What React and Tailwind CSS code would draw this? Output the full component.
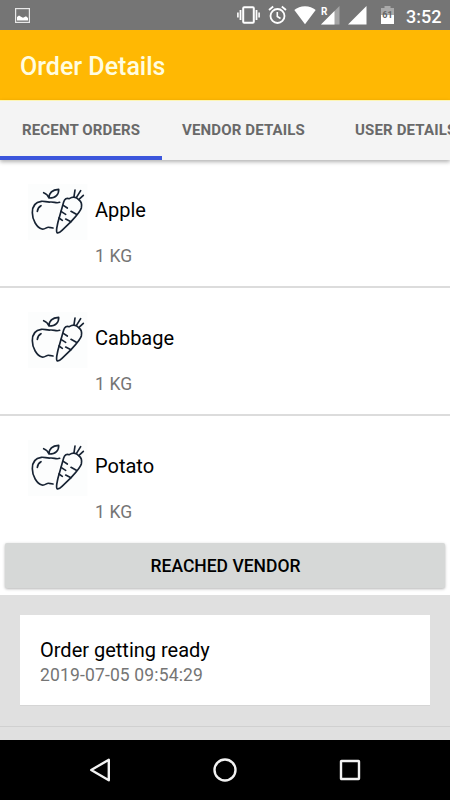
import { useState } from "react";

const tabs = [
  { label: "RECENT ORDERS", className: "w-[162px] pl-[22px]" },
  { label: "VENDOR DETAILS", className: "w-[173px] pl-[20px]" },
  { label: "USER DETAILS", className: "w-[162px] pl-[20px]" }
];

const items = [
  { name: "Apple", quantity: "1 KG" },
  { name: "Cabbage", quantity: "1 KG" },
  { name: "Potato", quantity: "1 KG" }
];

function StatusBar() {
  return (
    <div className="flex h-[30px] shrink-0 items-center bg-[#757575] text-white">
      {/* Screenshot notification */}
      <svg className="ml-[15px] h-[15px] w-[15px]" viewBox="0 0 15 15" fill="none">
        <rect x="0.6" y="0.6" width="13.8" height="13.8" stroke="#e8e8e8" strokeWidth="1.2" />
        <path d="M2 12.5V9l2-1.5 2 1.3 2 1 3-1.5 2 1.7v2.5z" fill="#fff" />
      </svg>

      <div className="ml-auto flex h-full items-center pr-[10px]">
        {/* Vibrate */}
        <svg className="h-[20px] w-[23px]" viewBox="0 0 23 20" fill="none" stroke="#fff">
          <rect x="6.2" y="2.2" width="10.6" height="15.6" rx="1" strokeWidth="2" />
          <path d="M3.5 5v10M19.5 5v10" strokeWidth="1.8" />
          <path d="M0.9 7.5v5M22.1 7.5v5" strokeWidth="1.6" />
        </svg>
        {/* Alarm */}
        <svg className="ml-[8px] h-[20px] w-[19px]" viewBox="0 0 19 20" fill="none" stroke="#fff">
          <circle cx="9.5" cy="11" r="7" strokeWidth="1.8" />
          <path d="M9.3 7v4.5l3.2 2" strokeWidth="1.6" />
          <path d="M1 5l4.2-3.5M18 5l-4.2-3.5" strokeWidth="1.8" />
        </svg>
        {/* Wifi */}
        <svg className="ml-[7px] h-[20px] w-[22px]" viewBox="0 0 22 20" fill="#fff">
          <path d="M11 19.2L0.3 5C3.2 2.6 6.8 1.2 11 1.2S18.8 2.6 21.7 5z" />
        </svg>
        {/* Roaming signal */}
        <div className="relative ml-[5px] h-[20px] w-[19px]">
          <svg className="h-[20px] w-[19px]" viewBox="0 0 19 20">
            <path d="M0 19.5L18.5 1v18.5z" fill="#a5a5a5" />
            <path d="M0 19.5L13.5 6v13.5z" fill="#fff" />
          </svg>
          <span className="absolute left-0 top-[2px] bg-[#757575] text-[10px] leading-[9px] font-bold">R</span>
        </div>
        <svg className="ml-[8px] h-[20px] w-[19px]" viewBox="0 0 19 20" fill="#fff">
          <path d="M0 19.5L18.5 1v18.5z" />
        </svg>
        {/* Battery */}
        <div className="relative ml-[14px] h-[20px] w-[13px]">
          <svg className="h-[20px] w-[13px]" viewBox="0 0 13 20">
            <path d="M3.5 1h6v2H13v7H0V3h3.5z" fill="#a9a9a9" />
            <path d="M0 10h13v9H0z" fill="#fff" />
          </svg>
          <span className="absolute inset-x-0 top-[6px] text-center text-[9px] leading-[9px] font-bold text-[#666]">61</span>
        </div>
        <span className="ml-[12px] mt-[3px] w-[34px] whitespace-nowrap text-[18px] leading-[20px] font-medium">3:52</span>
      </div>
    </div>
  );
}

function ProduceIcon() {
  return (
    <svg
      className="h-[60px] w-[65px] shrink-0"
      viewBox="0 0 195 180"
      fill="none"
      stroke="#172333"
      strokeWidth="5"
      strokeLinecap="round"
      strokeLinejoin="round"
    >
      <rect x="9" y="12" width="178" height="168" fill="#fcfdfd" stroke="none" />
      {/* Apple */}
      <path d="M104 67C93 71 88 65 76 66C66 67 58 63 49 64C31 66 22 80 22 98C22 120 35 142 51 147C61 149 64 140 73 142L84 144" />
      <path d="M37 94C38 85 42 80 48 77" />
      <path d="M56 38C65 41 69 46 72 54C72 38 83 29 101 28C102 43 92 54 73 54" />
      {/* Carrot */}
      <path d="M96 158C92 151 97 138 99 126L116 66C119 56 125 53 133 56C144 49 155 52 162 60C170 65 171 74 169 84C166 95 151 111 139 124L111 151C105 157 101 160 96 158Z" />
      <path d="M115 76l12 8M108 94l14 9M102 114l10 7M138 94l16 9M122 117l16 8" />
      <path d="M147 50l3-20M154 53l13-21M162 58l13-12" />
    </svg>
  );
}

function OrderItem({ item }) {
  return (
    <div className="flex h-[128px] shrink-0 border-b-2 border-[#dcdcdc] pl-[25px] pt-[20px] last:border-b-0">
      <ProduceIcon />
      <div className="pl-[5px]">
        <p className="mt-[18px] text-[20px] leading-[24px] text-black">{item.name}</p>
        <p className="mt-[22px] text-[17.5px] leading-[24px] tracking-[0.15px] text-[#757575]">{item.quantity}</p>
      </div>
    </div>
  );
}

export default function App() {
  const [activeTab, setActiveTab] = useState(0);

  return (
    <div className="flex h-[800px] w-[450px] flex-col overflow-hidden bg-white font-['Roboto',sans-serif]">
      <StatusBar />

      <header className="flex h-[70px] shrink-0 items-center bg-[#ffb803] pl-[20px] pt-[3px]">
        <h1 className="text-[25px] font-medium text-[#fffde0]">Order Details</h1>
      </header>

      {/* Tabs */}
      <div className="relative flex h-[60px] shrink-0 border-t border-[#fdf5b4] bg-[#f4f4f4] shadow-[0_2px_4px_rgba(0,0,0,0.3)]">
        {tabs.map((tab, index) => (
          <button
            key={tab.label}
            onClick={() => setActiveTab(index)}
            className={`shrink-0 whitespace-nowrap border-b-4 pt-[4px] text-left text-[15px] font-bold tracking-[0.15px] text-[#696969] ${tab.className} ${
              activeTab === index ? "border-[#3c56dc]" : "border-transparent"
            }`}
          >
            {tab.label}
          </button>
        ))}
      </div>

      {/* Ordered items */}
      <div className="flex h-[383px] shrink-0 flex-col overflow-hidden">
        {items.map((item) => (
          <OrderItem key={item.name} item={item} />
        ))}
      </div>

      <button className="mx-[5px] h-[45px] shrink-0 rounded-[2px] bg-[#d6d8d7] pl-[1px] pt-[2px] text-[17.5px] font-medium text-black shadow-[0_1px_3px_rgba(0,0,0,0.3)]">
        REACHED VENDOR
      </button>

      {/* Order status */}
      <div className="mt-[7px] flex-1 bg-[#e0e0e0] pt-[20px]">
        <div className="mx-[20px] h-[90px] bg-white pl-[20px] pt-[23px] shadow-[0_1px_0_#d5d5d5]">
          <p className="text-[20px] leading-[25px] text-black">Order getting ready</p>
          <p className="text-[17.5px] leading-[25px] tracking-[0.15px] text-[#757575]">2019-07-05 09:54:29</p>
        </div>
        <div className="mt-[21px] h-px bg-[#d0d0d0]" />
      </div>

      {/* Navigation bar */}
      <nav className="flex h-[60px] shrink-0 items-center justify-between bg-black px-[88px]">
        <svg className="h-[24px] w-[24px]" viewBox="0 0 24 24" fill="none" stroke="#f2f2f2" strokeWidth="2.4" strokeLinejoin="round">
          <path d="M3.2 12L20.8 1.8v20.4z" />
        </svg>
        <svg className="h-[24px] w-[24px]" viewBox="0 0 24 24" fill="none" stroke="#f2f2f2" strokeWidth="2.4">
          <circle cx="12" cy="12" r="10.5" />
        </svg>
        <svg className="h-[24px] w-[24px]" viewBox="0 0 24 24" fill="none" stroke="#f2f2f2" strokeWidth="2.4">
          <rect x="3" y="3" width="18" height="18" rx="0.5" />
        </svg>
      </nav>
    </div>
  );
}
